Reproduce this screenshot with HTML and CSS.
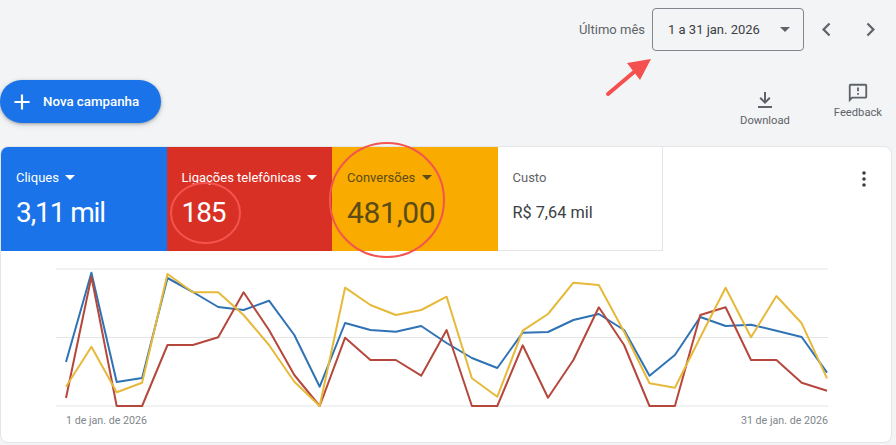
FILE: index.html
```html
<html>
    <head>
        <meta charset="utf-8">
        <link rel="stylesheet" href="styles.css">
    </head>
    <body>
        <div class="topbar">
            <span class="range-label">Último mês</span>
            <div class="range-box">
                <span>1 a 31 jan. 2026</span>
                <span class="caret caret-grey"></span>
            </div>
            <div class="nav-btn">
                <svg width="27" height="27" viewBox="0 0 24 24"><path d="M15.4 7.4 14 6l-6 6 6 6 1.4-1.4L10.8 12z" fill="#5f6368"/></svg>
            </div>
            <div class="nav-btn">
                <svg width="27" height="27" viewBox="0 0 24 24"><path d="M8.6 7.4 10 6l6 6-6 6-1.4-1.4L13.2 12z" fill="#5f6368"/></svg>
            </div>
        </div>

        <div class="actions">
            <button class="new-btn">
                <svg width="26" height="26" viewBox="0 0 24 24"><path d="M19 13h-6v6h-2v-6H5v-2h6V5h2v6h6z" fill="#fff"/></svg>
                Nova campanha
            </button>
            <div class="tools">
                <div class="tool tool-download">
                    <svg width="24" height="24" viewBox="0 0 24 24"><path d="M5 18h14v2H5zM13 4v8.2l3.1-3.1 1.4 1.4L12 16l-5.5-5.5 1.4-1.4L11 12.2V4z" fill="#5f6368"/></svg>
                    <span>Download</span>
                </div>
                <div class="tool tool-feedback">
                    <svg width="22" height="22" viewBox="0 0 24 24"><path d="M20 2H4c-1.1 0-2 .9-2 2v18l4-4h14c1.1 0 2-.9 2-2V4c0-1.1-.9-2-2-2zm0 14H5.200L4 17.200V4h16zM11 12h2v2h-2zm0-6h2v4h-2z" fill="#5f6368"/></svg>
                    <span>Feedback</span>
                </div>
            </div>
        </div>

        <div class="card">
            <div class="tiles">
                <div class="tile tile-blue">
                    <div class="tile-title">Cliques <span class="caret"></span></div>
                    <div class="tile-value tile-value-tight">3,11 mil</div>
                </div>
                <div class="tile tile-red">
                    <div class="tile-title">Ligações telefônicas <span class="caret"></span></div>
                    <div class="tile-value tile-value-tight">185</div>
                </div>
                <div class="tile tile-orange">
                    <div class="tile-title">Conversões <span class="caret"></span></div>
                    <div class="tile-value tile-value-big">481,00</div>
                </div>
                <div class="tile tile-white">
                    <div class="tile-title">Custo</div>
                    <div class="tile-value tile-value-small">R$ 7,64 mil</div>
                </div>
                <div class="more">
                    <svg width="24" height="24" viewBox="0 0 24 24"><circle cx="12" cy="6" r="1.800" fill="#3c4043"/><circle cx="12" cy="12" r="1.800" fill="#3c4043"/><circle cx="12" cy="18" r="1.800" fill="#3c4043"/></svg>
                </div>
            </div>

            <svg class="chart" width="890" height="157" viewBox="0 0 890 157">
                <g transform="translate(-1 -251)">
                    <line x1="56" y1="269" x2="828" y2="269" class="grid"/>
                    <line x1="56" y1="337.5" x2="828" y2="337.5" class="grid"/>
                    <line x1="56" y1="406" x2="828" y2="406" class="grid"/>
                    <polyline class="line line-blue" points="66,362 91.4,272.7 116.7,382 142.1,378 167.5,278 192.9,292 218.2,307 243.6,310 269,300.7 294.3,335 319.7,386.7 345.1,323 370.4,330 395.8,331.7 421.2,326 446.6,343 471.9,358 497.3,368 522.7,332.7 548,332 573.4,320 598.8,314 624.1,330 649.5,375.7 674.9,355 700.3,317 725.6,326 751,324.7 776.4,330.7 801.7,337 827,372.7"/>
                    <polyline class="line line-red" points="66,398 91.4,276.7 116.7,406 142.1,406 167.5,345 192.9,345 218.2,337.3 243.6,292.3 269,330 294.3,375 319.7,406 345.1,337.7 370.4,360 395.8,360 421.2,375.7 446.6,330 471.9,406 497.3,406 522.7,345.3 548,397.7 573.4,360 598.8,307.3 624.1,345 649.5,406 674.9,406 700.3,315 725.6,307.3 751,360 776.4,360 801.7,382.7 827,390.7"/>
                    <polyline class="line line-yellow" points="66,386.7 91.4,346.7 116.7,392.3 142.1,382.7 167.5,274 192.9,292.3 218.2,292.3 243.6,315 269,345 294.3,381.7 319.7,406 345.1,287.7 370.4,305 395.8,315 421.2,310 446.6,296.7 471.9,378.3 497.3,396.7 522.7,330.7 548,314 573.4,282.7 598.8,285 624.1,331.7 649.5,383.3 674.9,387.7 700.3,337.3 725.6,287.7 751,337.3 776.4,296 801.7,323.3 827,378.3"/>
                </g>
            </svg>
            <div class="chart-dates">
                <span>1 de jan. de 2026</span>
                <span>31 de jan. de 2026</span>
            </div>
        </div>

        <!-- marcacoes por cima do print -->
        <svg class="marks" width="896" height="445" viewBox="0 0 896 445">
            <ellipse cx="205.5" cy="213" rx="34.5" ry="30" class="ring"/>
            <circle cx="387" cy="200" r="57" class="ring"/>
            <line x1="608" y1="94" x2="634" y2="72" class="arrow-shaft"/>
            <polygon points="651,59 627,63 640,80" class="arrow-head"/>
        </svg>
    </body>
</html>
```

FILE: styles.css
```css
html, body {
    margin: 0;
    height: 445px;
    overflow: hidden;
}
body {
    position: relative;
    background-color: #f2f4f6;
    font-family: Roboto, "Liberation Sans", sans-serif;
    color: #3c4043;
}

.topbar {
    display: flex;
    align-items: center;
    justify-content: flex-end;
    height: 43px;
    padding-top: 8px;
    padding-right: 4px;
}
.range-label {
    font-size: 13px;
    color: #5f6368;
    margin-right: 7px;
}
.range-box {
    display: flex;
    align-items: center;
    justify-content: space-between;
    box-sizing: border-box;
    width: 152px;
    height: 43px;
    padding: 0 13px 0 15px;
    border: 1px solid #80868b;
    border-radius: 4px;
    font-size: 13px;
}
.nav-btn {
    display: flex;
    justify-content: center;
    width: 44px;
}

.caret {
    display: inline-block;
    width: 0;
    height: 0;
    margin-left: 3px;
    vertical-align: 2px;
    border-left: 5px solid transparent;
    border-right: 5px solid transparent;
    border-top: 5px solid currentColor;
}
.caret-grey {
    color: #5f6368;
}

.actions {
    display: flex;
    justify-content: space-between;
    height: 66px;
    padding-top: 29px;
    padding-right: 14px;
}
.new-btn {
    display: flex;
    align-items: center;
    gap: 8px;
    width: 161px;
    height: 43px;
    padding: 0 0 0 9px;
    border: 0;
    border-radius: 22px;
    background-color: #1a73e8;
    color: #fff;
    font-family: inherit;
    font-size: 13.3px;
    font-weight: 500;
    box-shadow: 0 1px 3px rgba(60, 64, 67, .4), 0 2px 6px rgba(60, 64, 67, .15);
}
.tools {
    display: flex;
    gap: 44px;
    margin-top: 2px;
}
.tool {
    display: flex;
    flex-direction: column;
    align-items: center;
    font-size: 11.2px;
    color: #5f6368;
}
.tool-download {
    padding-top: 6px;
    gap: 2px;
}
.tool-feedback {
    gap: 2px;
}

.card {
    box-sizing: border-box;
    width: 892px;
    height: 297px;
    background-color: #fff;
    border: 1px solid #e3e5e7;
    border-radius: 8px;
    overflow: hidden;
}
.tiles {
    display: flex;
    height: 104px;
}
.tile {
    box-sizing: border-box;
    width: 165.5px;
    padding: 23px 0 0 15px;
}
.tile-title {
    font-size: 13px;
    line-height: 16px;
}
.tile-value {
    margin-top: 9px;
    font-size: 28px;
    line-height: 36px;
}
.tile-value-tight {
    letter-spacing: -1.1px;
}
.tile-value-big {
    font-size: 30px;
    letter-spacing: -.3px;
}
.tile-value-small {
    margin-top: 15px;
    font-size: 16.3px;
    line-height: 24px;
}
.tile-blue {
    background-color: #1a73e8;
    color: #fff;
}
.tile-red {
    background-color: #d93025;
    color: #fff;
}
.tile-orange {
    background-color: #f9ab00;
    color: #5b4b17;
}
.tile-white {
    border-right: 1px solid #e3e5e7;
    border-bottom: 1px solid #e3e5e7;
}
.tile-white .tile-title {
    color: #5f6368;
}
.more {
    margin-left: auto;
    padding: 20px 15px 0 0;
}

.chart {
    display: block;
}
.grid {
    stroke: #e3e5e7;
    stroke-width: 1;
}
.line {
    fill: none;
    stroke-width: 2;
    stroke-linejoin: round;
}
.line-blue {
    stroke: #2f73b5;
}
.line-red {
    stroke: #b5473c;
}
.line-yellow {
    stroke: #e6b93a;
}
.chart-dates {
    display: flex;
    justify-content: space-between;
    width: 762px;
    margin-left: 65px;
    margin-top: 6px;
    font-size: 10.7px;
    color: #80868b;
}

.marks {
    position: absolute;
    top: 0;
    left: 0;
}
.ring {
    fill: none;
    stroke: #f4544f;
    stroke-width: 2;
}
.arrow-shaft {
    stroke: #f4504f;
    stroke-width: 4;
    stroke-linecap: round;
}
.arrow-head {
    fill: #f4504f;
}
```
